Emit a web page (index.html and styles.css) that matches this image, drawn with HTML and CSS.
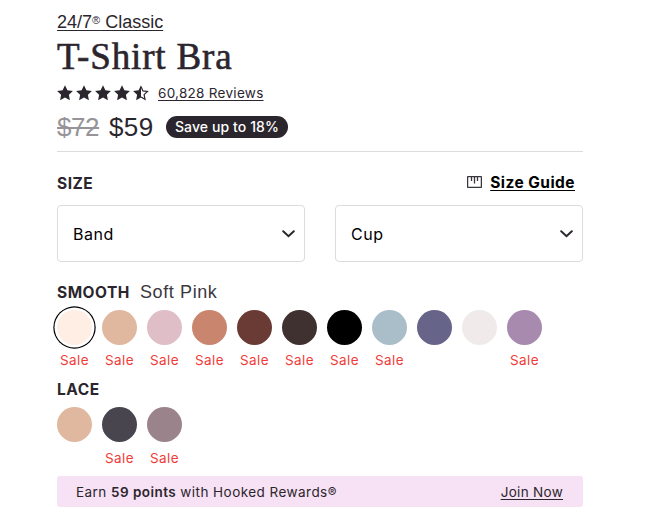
FILE: index.html
```html
<!DOCTYPE html>
<html lang="en">
<head>
    <meta charset="UTF-8">
    <title>24/7 Classic T-Shirt Bra</title>
    <link rel="stylesheet" href="styles.css">
</head>
<body>
    <svg width="0" height="0" class="defs">
        <symbol id="star" viewBox="0 0 16 16"><path d="M8 .2l2.4 5 5.5.7-4 3.8 1 5.6L8 12.6l-4.9 2.7 1-5.6-4-3.8 5.5-.7z" fill="#2b262d"/></symbol>
    </svg>
    <main class="product">
        <a class="collection">24/7<small>®</small> Classic</a>
        <h1 class="title">T-Shirt Bra</h1>

        <div class="rating">
            <div class="stars">
                <svg><use href="#star"/></svg>
                <svg><use href="#star"/></svg>
                <svg><use href="#star"/></svg>
                <svg><use href="#star"/></svg>
                <svg viewBox="0 0 16 16"><path d="M8 .2L5.6 5.2l-5.5.7 4 3.8-1 5.6L8 12.6z" fill="#2b262d"/><path d="M8 1.6l1.9 4.3 4.6.6-3.4 3.1.9 4.6-4-2.3" fill="none" stroke="#2b262d" stroke-width="1.2"/></svg>
            </div>
            <a class="reviews">60,828 Reviews</a>
        </div>

        <div class="prices">
            <s class="was">$72</s>
            <span class="now">$59</span>
            <span class="badge">Save up to 18%</span>
        </div>

        <div class="size-head">
            <h2 class="label">SIZE</h2>
            <a class="guide">
                <svg width="15" height="12" viewBox="0 0 15 12" fill="none" stroke="#3a363d" stroke-width="1.3"><rect x=".6" y=".6" width="13.8" height="10.8" rx=".5"/><path d="M4.5 1v4M7.5 1v6.5M10.5 1v4"/></svg>
                <span>Size Guide</span>
            </a>
        </div>

        <div class="selects">
            <div class="select">
                <span>Band</span>
                <svg width="13" height="8" viewBox="0 0 13 8"><path d="M1.2 1.2l5.3 5 5.3-5" fill="none" stroke="#2b262d" stroke-width="2" stroke-linecap="round"/></svg>
            </div>
            <div class="select">
                <span>Cup</span>
                <svg width="13" height="8" viewBox="0 0 13 8"><path d="M1.2 1.2l5.3 5 5.3-5" fill="none" stroke="#2b262d" stroke-width="2" stroke-linecap="round"/></svg>
            </div>
        </div>

        <div class="color-head">
            <h2 class="label smooth">SMOOTH</h2>
            <span class="color-name">Soft Pink</span>
        </div>
        <div class="swatches">
            <div class="swatch"><i class="dot soft-pink selected"></i><span>Sale</span></div>
            <div class="swatch"><i class="dot sand"></i><span>Sale</span></div>
            <div class="swatch"><i class="dot rose"></i><span>Sale</span></div>
            <div class="swatch"><i class="dot clay"></i><span>Sale</span></div>
            <div class="swatch"><i class="dot cocoa"></i><span>Sale</span></div>
            <div class="swatch"><i class="dot espresso"></i><span>Sale</span></div>
            <div class="swatch"><i class="dot black"></i><span>Sale</span></div>
            <div class="swatch"><i class="dot sky"></i><span>Sale</span></div>
            <div class="swatch"><i class="dot indigo"></i></div>
            <div class="swatch"><i class="dot pearl"></i></div>
            <div class="swatch"><i class="dot lilac"></i><span>Sale</span></div>
        </div>

        <div class="color-head lace-head">
            <h2 class="label">LACE</h2>
        </div>
        <div class="swatches lace-swatches">
            <div class="swatch"><i class="dot sand"></i></div>
            <div class="swatch"><i class="dot graphite"></i><span>Sale</span></div>
            <div class="swatch"><i class="dot mauve"></i><span>Sale</span></div>
        </div>

        <div class="rewards">
            <p>Earn <b>59 points</b> with Hooked Rewards<small>®</small></p>
            <a class="join">Join Now</a>
        </div>
    </main>
</body>
</html>
```

FILE: styles.css
```css
* { box-sizing: border-box; }
body {
    margin: 0;
    background: #fff;
    color: #2b262d;
    font-family: Inter, "Liberation Sans", Arial, sans-serif;
}
h1, h2, p { margin: 0; }
.defs { display: block; }
.product { width: 526px; margin-left: 57px; padding-top: 10px; }

.collection {
    display: block;
    height: 24px;
    font-family: "Liberation Sans", Arial, sans-serif;
    font-size: 18px;
    line-height: 24px;
    text-decoration: underline;
    text-underline-offset: 2px;
    text-decoration-thickness: 1px;
}
.collection small { font-size: 11px; line-height: 1; position: relative; top: -4px; }
.title {
    height: 45px;
    font-family: "Liberation Serif", "Times New Roman", serif;
    font-size: 37px;
    font-weight: 400;
    line-height: 45px;
    letter-spacing: .85px;
    white-space: nowrap;
    -webkit-text-stroke: .6px #2b262d;
}

.rating { display: flex; align-items: center; height: 29px; padding-bottom: 1px; }
.stars { display: flex; gap: 3px; width: 101px; }
.stars svg { width: 16px; height: 16px; flex: none; }
.reviews {
    font-size: 13.5px;
    letter-spacing: .28px;
    text-decoration: underline;
    text-underline-offset: 2px;
}

.prices {
    display: flex;
    align-items: center;
    height: 44px;
    padding-bottom: 5px;
    border-bottom: 1px solid #dcdcdc;
    font-family: "Liberation Sans", Arial, sans-serif;
    font-size: 26px;
}
.was { width: 52px; color: #969499; letter-spacing: -.4px; text-decoration-thickness: 2px; }
.now { width: 57px; letter-spacing: .4px; }
.badge {
    width: 122px;
    height: 22px;
    border-radius: 11px;
    background: #2b262d;
    color: #fff;
    font-family: Inter, sans-serif;
    font-size: 14px;
    font-weight: 500;
    line-height: 22px;
    letter-spacing: .1px;
    text-align: center;
}

.label { font-size: 15.5px; font-weight: 700; line-height: 20px; letter-spacing: .5px; }
.size-head {
    display: flex;
    justify-content: space-between;
    height: 53px;
    padding: 20px 8px 0 0;
}
.size-head .label { padding-top: 2px; }
.guide {
    display: flex;
    align-items: center;
    gap: 8px;
    height: 20px;
    color: #000;
    font-size: 15.5px;
    font-weight: 700;
    letter-spacing: .45px;
}
.guide span { text-decoration: underline; text-underline-offset: 2px; }

.selects { display: flex; gap: 30px; }
.select {
    display: flex;
    align-items: center;
    justify-content: space-between;
    width: 248px;
    height: 57px;
    padding: 0 9px 0 15px;
    border: 1px solid #dcdcdc;
    border-radius: 4px;
    color: #000;
    font-size: 16px;
    letter-spacing: .5px;
}

.color-head { display: flex; height: 48px; padding-top: 20px; line-height: 20px; }
.color-head .label { padding-top: 1px; }
.smooth { width: 83px; }
.color-name {
    color: #3c3840;
    font-family: "Liberation Sans", Arial, sans-serif;
    font-size: 18px;
    letter-spacing: .6px;
}
.swatches { display: flex; gap: 10px; height: 70px; }
.swatch { width: 35px; text-align: center; }
.swatch span {
    display: block;
    margin-top: 7px;
    color: #f03c38;
    font-size: 13.5px;
    line-height: 16px;
    letter-spacing: .4px;
}
.dot { display: block; width: 35px; height: 35px; border-radius: 50%; }
.selected { box-shadow: 0 0 0 2.5px #fff, 0 0 0 3.7px #000; }
.soft-pink { background: #ffeee3; }
.sand { background: #dfb89f; }
.rose { background: #dfbec8; }
.clay { background: #ca856f; }
.cocoa { background: #6a3b34; }
.espresso { background: #403131; }
.black { background: #000; }
.sky { background: #a9bec9; }
.indigo { background: #67648a; }
.pearl { background: #f0eaeb; }
.lilac { background: #a78aae; }
.graphite { background: #49454f; }
.mauve { background: #9b838c; }

.lace-head { height: 27px; padding-top: 0; }
.lace-head .label { padding-top: 0; }
.lace-swatches { height: 69px; }
.lace-swatches span { margin-top: 8px; }

.rewards {
    display: flex;
    align-items: center;
    justify-content: space-between;
    height: 31px;
    padding: 1px 20px 0 19px;
    border-radius: 3px;
    background: #f7e1f4;
    font-size: 13.5px;
    letter-spacing: .45px;
}
.rewards b { font-weight: 600; }
.rewards small { font-size: 13px; }
.join { letter-spacing: .3px; text-decoration: underline; text-underline-offset: 2px; }
```
